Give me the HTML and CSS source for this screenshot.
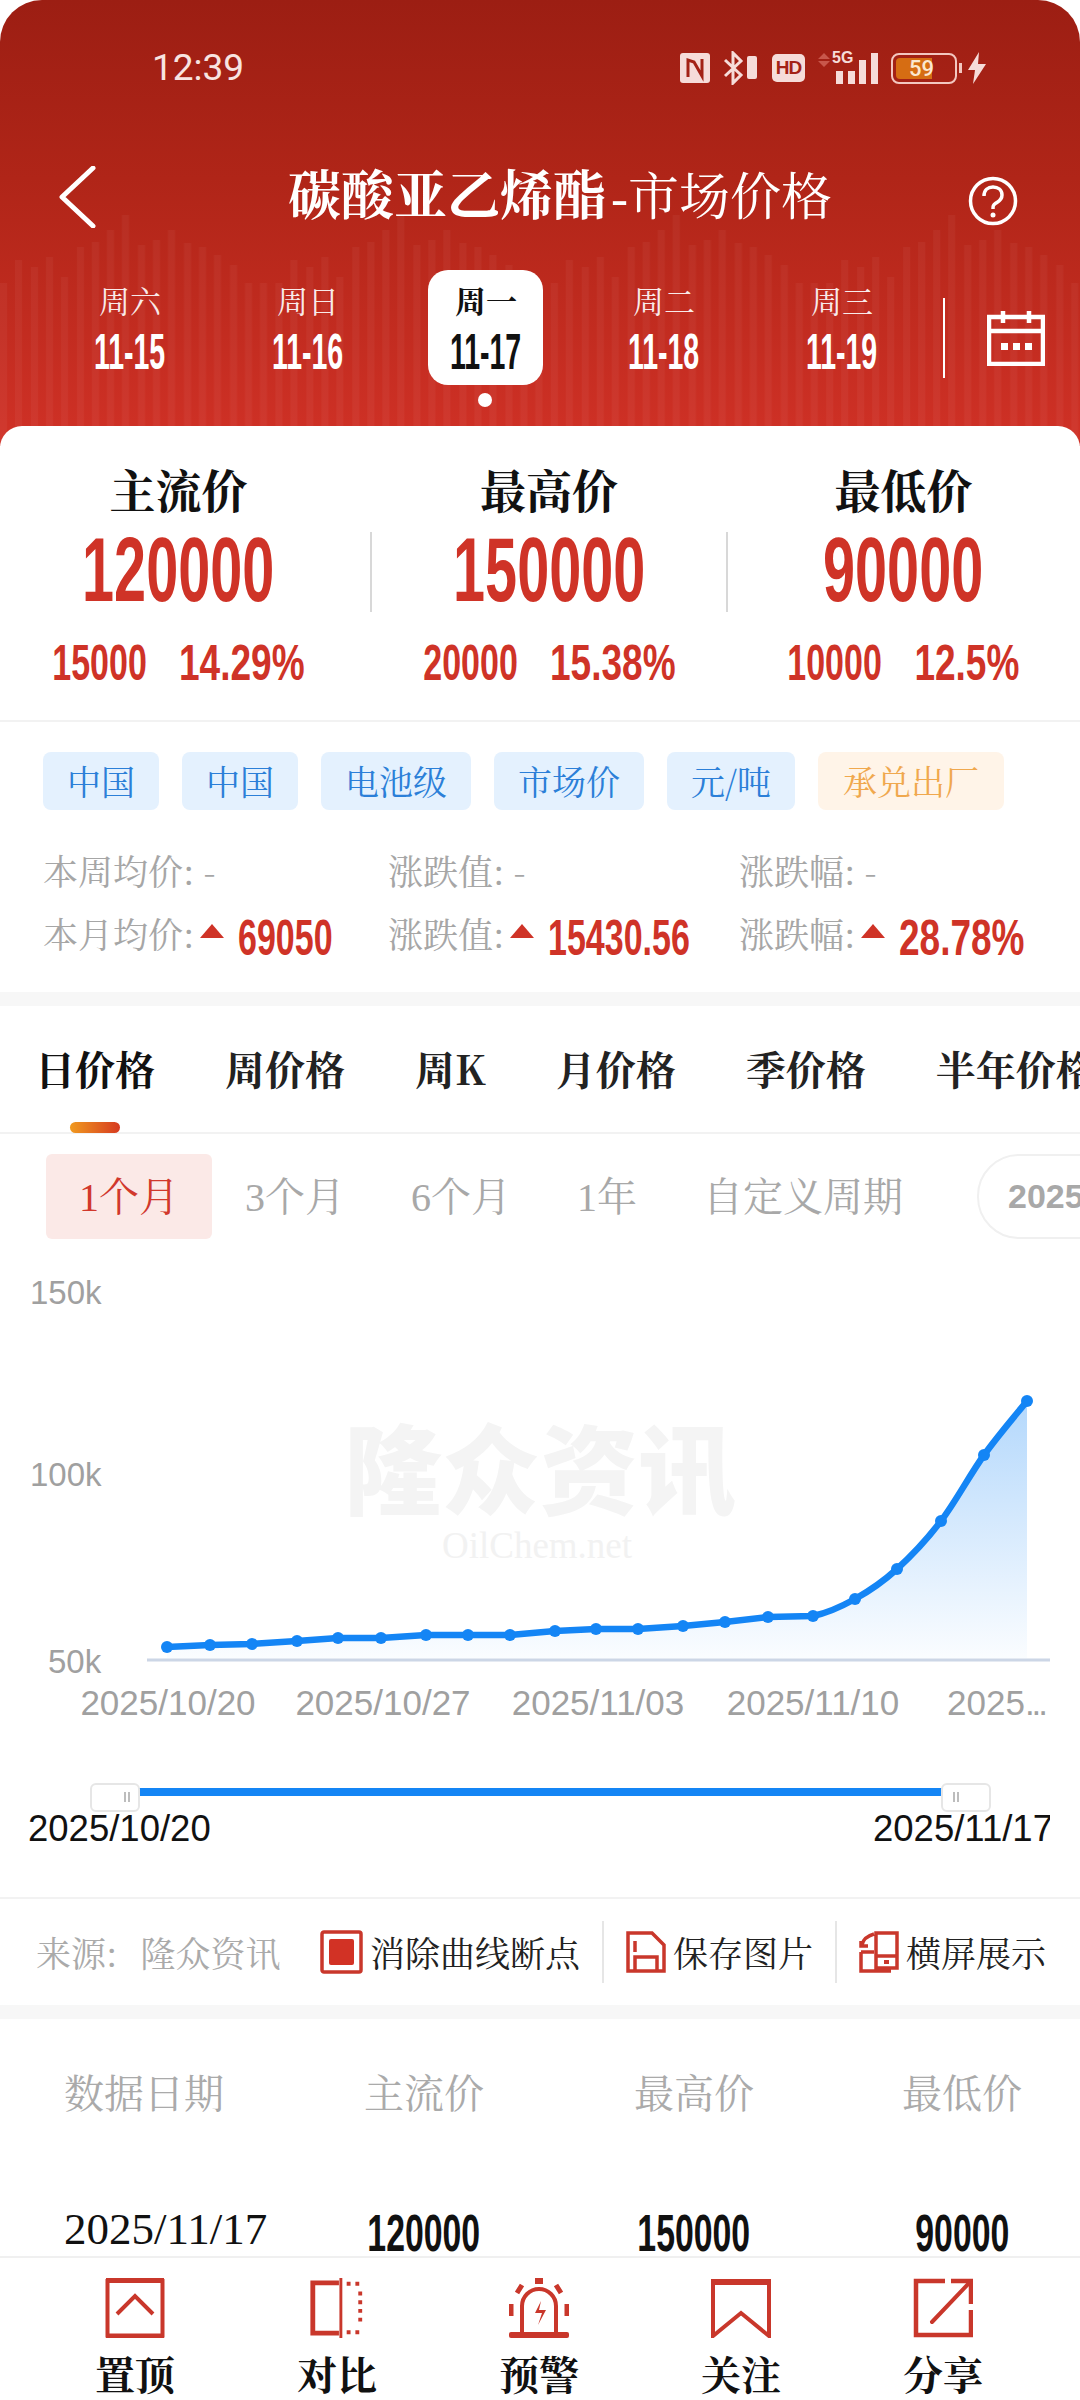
FILE: index.html
```html
<!DOCTYPE html>
<html lang="zh-CN">
<head>
    <meta charset="UTF-8" />
    <meta name="viewport" content="width=device-width, initial-scale=1" />
    <title>碳酸亚乙烯酯 - 市场价格</title>
    <link rel="stylesheet" href="styles.css">
</head>
<body>
    <div class="page">
        <header class="header">
            <svg class="header-bars" width="1080" height="446" aria-hidden="true">
                <defs>
                    <pattern id="bars" width="275.4" height="446" patternUnits="userSpaceOnUse">
                        <rect x="0" y="283" width="7" height="163" />
                        <rect x="15" y="260" width="7" height="186" />
                        <rect x="31" y="267" width="7" height="179" />
                        <rect x="46" y="257" width="7" height="189" />
                        <rect x="61" y="277" width="7" height="169" />
                        <rect x="77" y="247" width="7" height="199" />
                        <rect x="92" y="242" width="7" height="204" />
                        <rect x="107" y="230" width="7" height="216" />
                        <rect x="122" y="215" width="7" height="231" />
                        <rect x="138" y="245" width="7" height="201" />
                        <rect x="153" y="240" width="7" height="206" />
                        <rect x="168" y="230" width="7" height="216" />
                        <rect x="184" y="243" width="7" height="203" />
                        <rect x="199" y="247" width="7" height="199" />
                        <rect x="214" y="255" width="7" height="191" />
                        <rect x="230" y="265" width="7" height="181" />
                        <rect x="245" y="283" width="7" height="163" />
                        <rect x="260" y="283" width="7" height="163" />
                    </pattern>
                </defs>
                <rect width="1080" height="446" fill="url(#bars)" />
            </svg>

            <div class="status-bar">
                <span class="status-time">12:39</span>
                <div class="status-icons">
                    <svg width="30" height="30" viewBox="0 0 30 30" aria-hidden="true">
                        <rect width="30" height="30" rx="3" fill="#f6dcd9" />
                        <path d="M8 24V7l6 2 8 14V6" fill="none" stroke="#a32216" stroke-width="3" />
                    </svg>
                    <svg width="36" height="34" viewBox="0 0 36 34" aria-hidden="true">
                        <path d="M2 9l16 15-8 8V2l8 8L2 25" fill="none" stroke="#f6dcd9" stroke-width="3" />
                        <rect x="24" y="5" width="10" height="23" rx="2" fill="#f6dcd9" />
                    </svg>
                    <span class="status-hd">HD</span>
                    <div class="status-signal">
                        <svg width="60" height="32" viewBox="0 0 60 32" aria-hidden="true">
                            <path d="M6 1l6 6H0zM6 15l6-6H0z" fill="#c8574b" />
                            <rect x="18" y="19" width="7" height="13" fill="#f6dcd9" />
                            <rect x="30" y="19" width="7" height="13" fill="#f6dcd9" />
                            <rect x="41" y="8" width="7" height="24" fill="#f6dcd9" />
                            <rect x="53" y="1" width="7" height="31" fill="#f6dcd9" />
                        </svg>
                        <span class="status-5g">5G</span>
                    </div>
                    <div class="status-battery">
                        <div class="battery-box"><span class="battery-level">59</span></div>
                        <span class="battery-tip"></span>
                    </div>
                    <svg class="status-bolt" width="20" height="32" viewBox="0 0 20 32" aria-hidden="true">
                        <path d="M12 0L1 18h7l-2 14 13-20h-8z" fill="#f6dcd9" />
                    </svg>
                </div>
            </div>

            <div class="nav-bar">
                <svg class="nav-back" width="38" height="62" viewBox="0 0 38 62" aria-hidden="true">
                    <path d="M35 2L4 31l31 29" fill="none" stroke="#fff" stroke-width="5" stroke-linecap="round" stroke-linejoin="round" />
                </svg>
                <h1 class="nav-title"><b>碳酸亚乙烯酯</b><span class="nav-dash">-</span>市场价格</h1>
                <svg class="nav-help" width="50" height="50" viewBox="0 0 50 50" aria-hidden="true">
                    <circle cx="25" cy="25" r="22.5" fill="none" stroke="#fff" stroke-width="3.5" />
                    <path d="M16 20c0-6 4-9 9-9s9 3 9 8-3 6-6 8-3 3-3 6" fill="none" stroke="#fff" stroke-width="3.5" />
                    <circle cx="25" cy="39" r="2.5" fill="#fff" />
                </svg>
            </div>

            <div class="days">
                <div class="day"><span class="day-name">周六</span><span class="day-date"><i class="num">11-15</i></span></div>
                <div class="day"><span class="day-name">周日</span><span class="day-date"><i class="num">11-16</i></span></div>
                <div class="day day-active"><span class="day-name">周一</span><span class="day-date"><i class="num">11-17</i></span></div>
                <div class="day"><span class="day-name">周二</span><span class="day-date"><i class="num">11-18</i></span></div>
                <div class="day"><span class="day-name">周三</span><span class="day-date"><i class="num">11-19</i></span></div>
                <div class="days-cal">
                    <svg width="58" height="56" viewBox="0 0 58 56" aria-hidden="true">
                        <path d="M2 7h54v47H2zM2 21h54M16 1v12M42 1v12" fill="none" stroke="#fff" stroke-width="4.500" />
                        <rect x="14" y="33" width="7" height="7" fill="#fff" />
                        <rect x="26" y="33" width="7" height="7" fill="#fff" />
                        <rect x="38" y="33" width="7" height="7" fill="#fff" />
                    </svg>
                </div>
            </div>
        </header>

        <main class="sheet">
            <section class="prices">
                <div class="price">
                    <div class="price-label">主流价</div>
                    <div class="price-value"><i class="num">120000</i></div>
                    <div class="price-change"><span class="chg"><i class="num">15000</i></span><span class="chg chg-pct"><i class="num">14.29%</i></span></div>
                </div>
                <div class="price price-mid">
                    <div class="price-label">最高价</div>
                    <div class="price-value"><i class="num">150000</i></div>
                    <div class="price-change"><span class="chg"><i class="num">20000</i></span><span class="chg chg-pct"><i class="num">15.38%</i></span></div>
                </div>
                <div class="price">
                    <div class="price-label">最低价</div>
                    <div class="price-value"><i class="num">90000</i></div>
                    <div class="price-change"><span class="chg"><i class="num">10000</i></span><span class="chg chg-pct chg-short"><i class="num">12.5%</i></span></div>
                </div>
            </section>

            <section class="summary">
                <div class="tags">
                    <span class="tag">中国</span>
                    <span class="tag">中国</span>
                    <span class="tag">电池级</span>
                    <span class="tag">市场价</span>
                    <span class="tag">元/吨</span>
                    <span class="tag tag-orange">承兑出厂</span>
                </div>
                <div class="stats">
                    <div class="stat">本周均价: -</div>
                    <div class="stat">涨跌值: -</div>
                    <div class="stat">涨跌幅: -</div>
                    <div class="stat">本月均价:<span class="up"></span><b class="stat-num"><i class="num">69050</i></b></div>
                    <div class="stat">涨跌值:<span class="up"></span><b class="stat-num"><i class="num">15430.56</i></b></div>
                    <div class="stat">涨跌幅:<span class="up"></span><b class="stat-num stat-pct"><i class="num">28.78%</i></b></div>
                </div>
            </section>

            <nav class="tabs">
                <span class="tab tab-active">日价格</span>
                <span class="tab">周价格</span>
                <span class="tab">周K</span>
                <span class="tab">月价格</span>
                <span class="tab">季价格</span>
                <span class="tab">半年价格</span>
            </nav>

            <div class="periods">
                <span class="period period-active">1个月</span>
                <span class="period">3个月</span>
                <span class="period">6个月</span>
                <span class="period">1年</span>
                <span class="period">自定义周期</span>
                <span class="period-date">2025/10/20</span>
            </div>

            <svg class="chart" width="1050" height="659" viewBox="0 1238 1050 659">
                <defs>
                    <linearGradient id="area" x1="0" y1="0" x2="0" y2="1">
                        <stop offset="0" stop-color="#1485f5" stop-opacity=".32" />
                        <stop offset="1" stop-color="#1485f5" stop-opacity=".02" />
                    </linearGradient>
                </defs>
                <text class="wm-cn" x="540" y="1507" text-anchor="middle">隆众资讯</text>
                <text class="wm-en" x="537" y="1558" text-anchor="middle">OilChem.net</text>

                <text class="axis axis-y" x="30" y="1304">150k</text>
                <text class="axis axis-y" x="30" y="1486">100k</text>
                <text class="axis axis-y" x="48" y="1673">50k</text>

                <path class="chart-area" d="M167 1647L210 1645 252 1644 297 1641 338 1638 381 1638 426 1635 468 1635 510 1635 555 1631 596 1629 638 1629 683 1626 725 1622 768 1617 813 1616C827.500 1613 841 1606.800 855 1599 869 1591.200 882.700 1582 897 1569 911.300 1556 926.500 1540 941 1521 955.500 1502 969.700 1475 984 1455 998.300 1435 1020 1410 1027 1401V1658H167Z" />
                <line class="chart-base" x1="147" y1="1660" x2="1050" y2="1660" />
                <path class="chart-line" d="M167 1647L210 1645 252 1644 297 1641 338 1638 381 1638 426 1635 468 1635 510 1635 555 1631 596 1629 638 1629 683 1626 725 1622 768 1617 813 1616C827.500 1613 841 1606.800 855 1599 869 1591.200 882.700 1582 897 1569 911.300 1556 926.500 1540 941 1521 955.500 1502 969.700 1475 984 1455 998.300 1435 1020 1410 1027 1401" />
                <g class="chart-dots">
                    <circle cx="167" cy="1647" r="6" /><circle cx="210" cy="1645" r="6" /><circle cx="252" cy="1644" r="6" />
                    <circle cx="297" cy="1641" r="6" /><circle cx="338" cy="1638" r="6" /><circle cx="381" cy="1638" r="6" />
                    <circle cx="426" cy="1635" r="6" /><circle cx="468" cy="1635" r="6" /><circle cx="510" cy="1635" r="6" />
                    <circle cx="555" cy="1631" r="6" /><circle cx="596" cy="1629" r="6" /><circle cx="638" cy="1629" r="6" />
                    <circle cx="683" cy="1626" r="6" /><circle cx="725" cy="1622" r="6" /><circle cx="768" cy="1617" r="6" />
                    <circle cx="813" cy="1616" r="6" /><circle cx="855" cy="1599" r="6" /><circle cx="897" cy="1569" r="6" />
                    <circle cx="941" cy="1521" r="6" /><circle cx="984" cy="1455" r="6" /><circle cx="1027" cy="1401" r="6" />
                </g>

                <text class="axis" x="168" y="1715" text-anchor="middle">2025/10/20</text>
                <text class="axis" x="383" y="1715" text-anchor="middle">2025/10/27</text>
                <text class="axis" x="598" y="1715" text-anchor="middle">2025/11/03</text>
                <text class="axis" x="813" y="1715" text-anchor="middle">2025/11/10</text>
                <text class="axis" x="947" y="1715">2025<tspan class="axis-dots">...</tspan></text>

                <rect class="slider-line" x="139" y="1788" width="803" height="8" />
                <rect class="slider-handle" x="91" y="1784" width="48" height="27" rx="5" />
                <rect class="slider-handle" x="942" y="1784" width="48" height="27" rx="5" />
                <path class="slider-grip" d="M125 1792v10M129 1792v10M954 1792v10M958 1792v10" />
                <text class="slider-label" x="28" y="1841">2025/10/20</text>
                <text class="slider-label" x="873" y="1841">2025/11/17</text>
            </svg>

            <div class="tools">
                <span class="tools-source">来源:<span class="tools-name">隆众资讯</span></span>
                <div class="tool">
                    <svg width="43" height="44" viewBox="0 0 43 44" aria-hidden="true">
                        <rect x="2" y="2" width="39" height="40" rx="2" fill="none" stroke="#c9372b" stroke-width="3.5" />
                        <rect x="9" y="9" width="25" height="26" rx="2" fill="#d23225" />
                    </svg>
                    <span>消除曲线断点</span>
                </div>
                <div class="tool tool-sep">
                    <svg width="40" height="42" viewBox="0 0 40 42" aria-hidden="true">
                        <path d="M2 2h24l12 12v26H2zM9 10v11M9 40V26h22v14" fill="none" stroke="#c9372b" stroke-width="3.5" />
                    </svg>
                    <span>保存图片</span>
                </div>
                <div class="tool tool-sep">
                    <svg width="40" height="42" viewBox="0 0 40 42" aria-hidden="true">
                        <path d="M17 2h21v35H17zM17 25h21M15 3C8 5 4 8 3 14M2 10v5h7M2 21h13M2 21v19h30" fill="none" stroke="#c9372b" stroke-width="3.5" />
                        <rect x="25" y="29" width="5" height="4" fill="#c9372b" />
                    </svg>
                    <span>横屏展示</span>
                </div>
            </div>

            <section class="table">
                <div class="table-row table-head">
                    <span>数据日期</span><span>主流价</span><span>最高价</span><span>最低价</span>
                </div>
                <div class="table-row table-body">
                    <span class="table-date">2025/11/17</span>
                    <b><i class="num">120000</i></b>
                    <b><i class="num">150000</i></b>
                    <b><i class="num">90000</i></b>
                </div>
            </section>
        </main>

        <footer class="actions">
            <div class="action">
                <svg width="60" height="60" viewBox="0 0 60 60" aria-hidden="true">
                    <path d="M2.5 3h55v54.500h-55z" fill="none" stroke="#c9372b" stroke-width="4" />
                    <path d="M1 2h58M1 58h58" stroke="#c9372b" stroke-width="4" />
                    <path d="M12 36l18-18 18 18" fill="none" stroke="#c9372b" stroke-width="4" />
                </svg>
                <span>置顶</span>
            </div>
            <div class="action">
                <svg width="60" height="60" viewBox="0 0 60 62" aria-hidden="true">
                    <path d="M32 5H5v52h27" fill="none" stroke="#c9372b" stroke-width="5" />
                    <path d="M34 0v62" stroke="#c9372b" stroke-width="3" />
                    <path d="M40 6h16M40 56h16M54 14v36" fill="none" stroke="#c9372b" stroke-width="4" stroke-dasharray="4 5" />
                </svg>
                <span>对比</span>
            </div>
            <div class="action">
                <svg width="60" height="60" viewBox="0 0 60 60" aria-hidden="true">
                    <rect x="0" y="54" width="60" height="6" rx="2" fill="#c9372b" />
                    <path d="M13 54V28a17 17 0 0 1 34 0v26" fill="none" stroke="#c9372b" stroke-width="4" />
                    <path d="M32 23l-6 12h7l-4 12 8-15h-7z" fill="#c9372b" />
                    <rect x="26" y="0" width="8" height="6" fill="#c9372b" />
                    <path d="M8 15l5-8M52 15l-5-8M2 26v12M58 26v12" stroke="#c9372b" stroke-width="5" />
                </svg>
                <span>预警</span>
            </div>
            <div class="action">
                <svg width="60" height="60" viewBox="0 0 60 60" aria-hidden="true">
                    <path d="M2 58V3h56v55L30 35z" fill="none" stroke="#c9372b" stroke-width="4" />
                    <path d="M0 4h60" stroke="#c9372b" stroke-width="6" />
                </svg>
                <span>关注</span>
            </div>
            <div class="action">
                <svg width="60" height="60" viewBox="0 0 60 60" aria-hidden="true">
                    <path d="M32 3H3v54h55V32M58 26V3H38" fill="none" stroke="#c9372b" stroke-width="4.500" />
                    <path d="M58 3L19 44" fill="none" stroke="#c9372b" stroke-width="4" stroke-linecap="round" />
                </svg>
                <span>分享</span>
            </div>
        </footer>
    </div>
</body>
</html>
```
FILE: styles.css
```css
*, *::before, *::after {
    box-sizing: border-box;
}

body {
    margin: 0;
    background: #fff;
    color: #111;
    font-family: "Noto Serif CJK SC", "Source Han Serif SC", "Liberation Serif", "Noto Sans CJK SC", serif;
}

.page {
    width: 1080px;
    height: 2400px;
    display: flex;
    flex-direction: column;
    overflow: hidden;
}

/* condensed digits, the app's number face */
.num {
    display: inline-block;
    flex: none;
    font-family: "Liberation Sans", sans-serif;
    font-style: normal;
    white-space: nowrap;
    transform: scaleX(.65);
}

/* Header */
.header {
    position: relative;
    flex: none;
    height: 446px;
    border-radius: 42px 42px 0 0;
    overflow: hidden;
    color: #fff;
    background: linear-gradient(#9c1e13, #b02518 40%, #d03126);
}

.header-bars {
    position: absolute;
    left: 0;
    top: 0;
    fill: rgba(255, 255, 255, .04);
}

.status-bar, .nav-bar, .days {
    position: relative;
}

.status-bar {
    height: 104px;
    padding: 44px 93px 0 152px;
    display: flex;
    justify-content: space-between;
}

.status-time {
    font: 400 37px/1.3 Roboto, sans-serif;
    color: #f8e4e1;
}

.status-icons {
    display: flex;
    align-items: center;
    gap: 13px;
    height: 48px;
    color: #f6dcd9;
}

.status-hd {
    background: #f6dcd9;
    color: #a32216;
    border-radius: 5px;
    width: 33px;
    height: 28px;
    text-align: center;
    font: 700 19px/28px "Liberation Sans", sans-serif;
    letter-spacing: -1px;
}

.status-signal {
    position: relative;
    width: 60px;
    height: 32px;
}

.status-5g {
    position: absolute;
    left: 14px;
    top: -3px;
    font: 700 16px/18px "Liberation Sans", sans-serif;
}

.status-battery {
    display: flex;
    align-items: center;
    gap: 2px;
}

.battery-box {
    width: 66px;
    height: 31px;
    padding: 3px;
    border: 2px solid #f3c7c0;
    border-radius: 8px;
}

.battery-level {
    display: block;
    width: 36px;
    height: 21px;
    border-radius: 4px 0 0 4px;
    background: #d66d13;
    color: #fbe7cf;
    font: 500 22px/21px Roboto, sans-serif;
    padding-left: 13px;
    white-space: nowrap;
}

.battery-tip {
    width: 3px;
    height: 10px;
    background: #f3c7c0;
}

.status-bolt {
    margin-left: -8px;
}

.nav-bar {
    height: 160px;
    padding: 60px 62px 0 58px;
    display: flex;
    align-items: flex-start;
}

.nav-back {
    margin-top: 2px;
}

.nav-help {
    margin: 12px 0 0 auto;
}

.nav-title {
    margin: -4px 0 0 192px;
    font-size: 51px;
    line-height: 64px;
    font-weight: 400;
    white-space: nowrap;
}

.nav-title b {
    font-size: 53px;
    font-weight: 700;
}

.nav-dash {
    margin-left: 5px;
    font-family: "Liberation Serif", serif;
}

.days {
    display: flex;
    padding-left: 41px;
    margin-top: 6px;
    z-index: 0;
}

.day {
    position: relative;
    width: 178px;
    height: 115px;
    display: flex;
    flex-direction: column;
    align-items: center;
    padding-top: 10px;
}

.day-name {
    font-size: 31px;
    line-height: 40px;
    opacity: .9;
}

.day-date {
    font-size: 50px;
    line-height: 54px;
    font-weight: 700;
}

.day-date .num {
    transform: scaleX(.57);
}

.day-active {
    color: #111;
}

.day-active .day-name {
    opacity: 1;
    font-weight: 700;
}

.day-active::before {
    content: "";
    position: absolute;
    left: 31px;
    top: 0;
    width: 115px;
    height: 115px;
    border-radius: 20px;
    background: #fff;
    z-index: -1;
}

.day-active::after {
    content: "";
    position: absolute;
    left: 81px;
    top: 123px;
    width: 14px;
    height: 14px;
    border-radius: 50%;
    background: #fff;
}

.days-cal {
    margin: 28px 0 0 12px;
    padding: 12px 0 0 42px;
    height: 80px;
    border-left: 2px solid #fff;
}

/* White sheet */
.sheet {
    position: relative;
    flex: 1;
    min-height: 0;
    margin-top: -20px;
    border-radius: 22px 22px 0 0;
    background: #fff;
    overflow: hidden;
}

.prices {
    height: 296px;
    padding-top: 33px;
    display: grid;
    grid-template-columns: 371px 356px 353px;
    border-bottom: 2px solid #f2f2f2;
}

.price {
    position: relative;
    text-align: center;
}

.price:first-child {
    padding-right: 14px;
}

.price-label {
    font-size: 46px;
    line-height: 58px;
    font-weight: 700;
}

.price-value {
    margin-top: -2px;
    font-size: 90px;
    line-height: 94px;
    font-weight: 700;
    color: #cf3327;
}

.price-value .num {
    transform: scaleX(.64);
}

.price-change {
    margin-top: 18px;
    display: flex;
    justify-content: center;
    gap: 35px;
    color: #cf3327;
    font-size: 50px;
    line-height: 56px;
    font-weight: 700;
}

.price-change .num {
    transform: scaleX(.68);
}

.chg {
    width: 92px;
    display: flex;
    justify-content: center;
}

.chg-pct {
    width: 122px;
}

.price-change .chg-pct .num {
    transform: scaleX(.74);
}

.chg-short {
    width: 102px;
}

.price-mid::before, .price-mid::after {
    content: "";
    position: absolute;
    top: 73px;
    height: 80px;
    width: 2px;
    background: #d8d8d8;
}

.price-mid::before {
    left: -1px;
}

.price-mid::after {
    right: -1px;
}

.summary {
    height: 284px;
    padding: 30px 44px 0 43px;
    border-bottom: 14px solid #f7f7f7;
}

.tags {
    display: flex;
    gap: 23px;
}

.tag {
    padding: 0 24px;
    height: 58px;
    border-radius: 8px;
    background: #e4f1fe;
    color: #2b7fd8;
    font-size: 34px;
    line-height: 58px;
    white-space: nowrap;
}

.tag-orange {
    padding: 0 25px;
    background: #fff4e8;
    color: #f0a84e;
}

.stats {
    margin-top: 28px;
    display: grid;
    grid-template-columns: 345px 351px 1fr;
    grid-auto-rows: 63px;
    align-items: center;
    color: #a6a6a6;
    font-size: 35px;
    white-space: nowrap;
}

.stat {
    display: flex;
    align-items: center;
}

.up {
    width: 0;
    height: 0;
    margin: 0 14px 4px 6px;
    border-left: 12px solid transparent;
    border-right: 12px solid transparent;
    border-bottom: 14px solid #cf3327;
}

.stat-num {
    color: #cf3327;
    font-size: 50px;
}

.stat-num .num {
    transform: scaleX(.68);
    transform-origin: left center;
}

.stat-pct .num {
    transform: scaleX(.74);
}

/* Tabs */
.tabs {
    position: relative;
    height: 128px;
    padding: 37px 0 0 35px;
    display: flex;
    gap: 70px;
    border-bottom: 2px solid #f2f2f2;
    white-space: nowrap;
}

.tab {
    font-size: 40px;
    line-height: 50px;
    font-weight: 700;
    color: #222;
}

.tab-active {
    position: relative;
    color: #111;
}

.tab-active::after {
    content: "";
    position: absolute;
    left: 35px;
    top: 79px;
    width: 50px;
    height: 11px;
    border-radius: 6px;
    background: linear-gradient(90deg, #f09a20, #d63a20);
}

.periods {
    position: relative;
    height: 104px;
    padding: 20px 0 0 46px;
    display: flex;
    align-items: flex-start;
    gap: 66px;
    color: #a8a8a8;
    white-space: nowrap;
}

.period {
    height: 85px;
    font-size: 40px;
    line-height: 88px;
    font-family: "Liberation Serif", "Noto Serif CJK SC", "Noto Sans CJK SC", serif;
}

.period-active {
    width: 166px;
    margin-right: -33px;
    text-align: center;
    border-radius: 6px;
    background: #fbe9e7;
    color: #d1382c;
}

.period-date {
    position: absolute;
    left: 977px;
    top: 20px;
    width: 240px;
    height: 85px;
    padding-left: 29px;
    border: 2px solid #f0f0f0;
    border-radius: 42px;
    font: 700 34px/81px "Liberation Sans", sans-serif;
}

/* Chart */
.chart {
    display: block;
    overflow: hidden;
}

.axis {
    font: 35px "Liberation Sans", sans-serif;
    fill: #a0a0a0;
}

.axis-y {
    font-size: 33px;
}

.axis-dots {
    letter-spacing: -3px;
}

.wm-cn {
    font: 900 98px "Noto Sans CJK SC", sans-serif;
    fill: #f4f4f4;
}

.wm-en {
    font: 37px "Liberation Serif", serif;
    fill: #f2f2f2;
}

.chart-area {
    fill: url(#area);
}

.chart-base {
    stroke: #ccd6e6;
    stroke-width: 3;
}

.chart-line {
    fill: none;
    stroke: #1485f5;
    stroke-width: 6.500;
    stroke-linejoin: round;
}

.chart-dots {
    fill: #1485f5;
}

.slider-line {
    fill: #1485f5;
}

.slider-handle {
    fill: #fff;
    stroke: #e6e6e6;
    stroke-width: 2;
}

.slider-grip {
    stroke: #bdbdbd;
    stroke-width: 2;
}

.slider-label {
    font: 36.500px "Liberation Sans", sans-serif;
    fill: #111;
}

/* Source and tools row */
.tools {
    height: 122px;
    border-top: 2px solid #f2f2f2;
    border-bottom: 14px solid #f7f7f7;
    padding: 22px 0 0 36px;
    display: flex;
    align-items: flex-start;
    white-space: nowrap;
}

.tools-source {
    width: 284px;
    color: #aaa;
    font-size: 35px;
    line-height: 62px;
}

.tools-name {
    margin-left: 23px;
}

.tool {
    display: flex;
    align-items: center;
    gap: 7px;
    height: 62px;
    font-size: 35px;
    color: #222;
}

.tool-sep {
    margin-left: 22px;
    padding-left: 22px;
    border-left: 2px solid #e6e6e6;
}

/* Table */
.table {
    padding-top: 42px;
}

.table-row {
    display: grid;
    grid-template-columns: 288px 272px 268px 268px;
    text-align: center;
    white-space: nowrap;
}

.table-row > :first-child {
    text-align: left;
    padding-left: 64px;
}

.table-head {
    height: 140px;
    font-size: 40px;
    line-height: 60px;
    color: #aaa;
}

.table-body {
    font-size: 52px;
    line-height: 56px;
}

.table-date {
    font-family: "Liberation Serif", serif;
    font-size: 45px;
}

/* Bottom actions */
.actions {
    flex: none;
    height: 144px;
    padding: 20px 0 0 34px;
    border-top: 2px solid #f0f0f0;
    background: #fff;
    display: grid;
    grid-template-columns: repeat(5, 202px);
}

.action {
    display: flex;
    flex-direction: column;
    align-items: center;
    gap: 12px;
    font-size: 40px;
    line-height: 46px;
    font-weight: 700;
}

.action svg {
    flex: none;
}
```
